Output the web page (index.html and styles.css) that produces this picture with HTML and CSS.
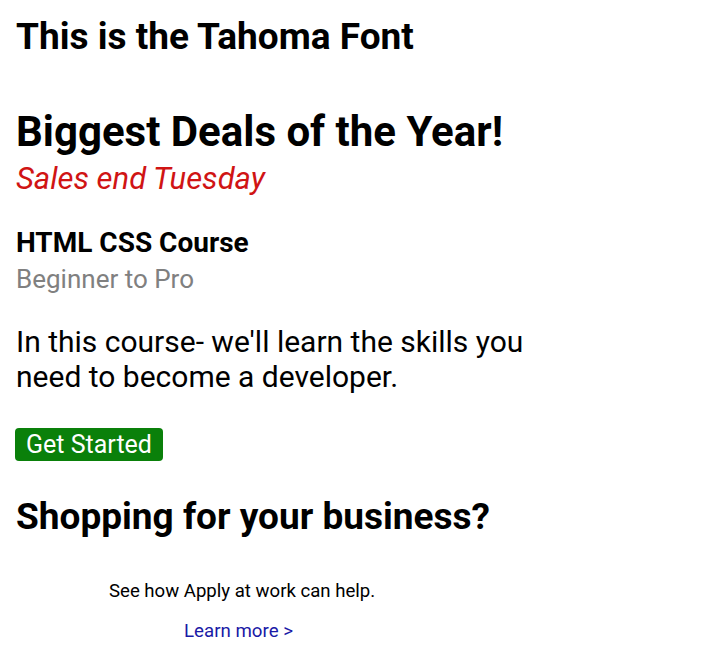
FILE: index.html
```html
<!DOCTYPE html>
<html>
<head>
<meta charset="utf-8">
<link rel="stylesheet" href="styles.css">
</head>
<body>
<p class="title">This is the Tahoma Font</p>
<p class="deals">Biggest Deals of the Year!</p>
<p class="sales">Sales end Tuesday</p>
<p class="course">HTML CSS Course</p>
<p class="level">Beginner to Pro</p>
<p class="desc">In this course- we'll learn the skills you need to become a developer.</p>
<button class="start">Get Started</button>
<p class="shop">Shopping for your business?</p>
<p class="help">See how Apply at work can help.</p>
<p class="learn">Learn more &gt;</p>
</body>
</html>
```
FILE: styles.css
```css
body {
  margin: 0;
  padding: 15px 16px 0;
  font-family: Roboto, "Liberation Sans", sans-serif;
  color: #000;
}
p { margin: 0; }
.title { font-size: 37px; line-height: 44px; font-weight: bold; }
.deals { font-size: 42px; line-height: 50px; font-weight: bold; margin-top: 48px; }
.sales { font-size: 31px; line-height: 38px; font-style: italic; color: #d01414; margin-top: 3px; }
.course { font-size: 28px; line-height: 34px; font-weight: bold; margin-top: 28px; }
.level { font-size: 26px; line-height: 32px; color: #808080; margin-top: 3px; }
.desc { font-size: 30px; line-height: 35px; width: 540px; margin-top: 29px; }
.start {
  display: block;
  margin-top: 34px;
  background: #0a800a;
  color: #fff;
  border: none;
  border-radius: 4px;
  font-family: Roboto, sans-serif;
  font-size: 25px;
  line-height: 33px;
  padding: 0 11px;
  height: 33px;
  width: 148px;
  margin-left: -1px;
}
.shop { font-size: 37px; line-height: 44px; font-weight: bold; margin-top: 34px; }
.help { font-size: 18.6px; line-height: 22px; margin-top: 41px; padding-left: 93px; }
.learn { font-size: 18.7px; line-height: 22px; color: #1a1aa6; margin-top: 18px; padding-left: 168px; }
```
